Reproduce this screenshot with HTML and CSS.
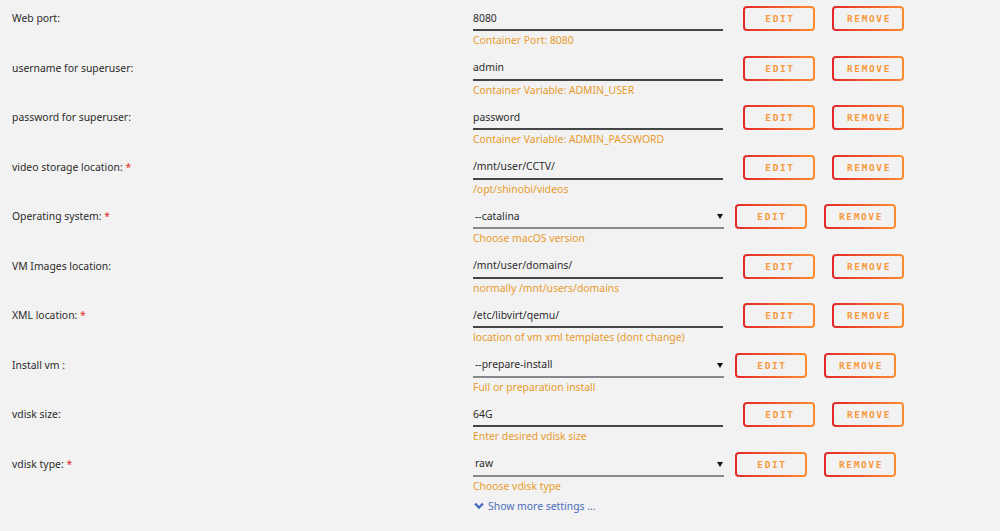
FILE: index.html
```html
<!DOCTYPE html>
<html lang="en">
<head>
    <meta charset="UTF-8">
    <title>Template settings</title>
    <link rel="stylesheet" href="styles.css">
</head>
<body>

    <div class="config-list">
        <div class="config-row">
            <div class="config-label">Web port:</div>
            <div class="config-field">
                <input class="text-input" type="text" value="8080">
                <div class="config-desc">Container Port: 8080</div>
            </div>
            <button class="grad-button edit-button">EDIT</button>
            <button class="grad-button">REMOVE</button>
        </div>

        <div class="config-row">
            <div class="config-label">username for superuser:</div>
            <div class="config-field">
                <input class="text-input" type="text" value="admin">
                <div class="config-desc">Container Variable: ADMIN_USER</div>
            </div>
            <button class="grad-button edit-button">EDIT</button>
            <button class="grad-button">REMOVE</button>
        </div>

        <div class="config-row">
            <div class="config-label">password for superuser:</div>
            <div class="config-field">
                <input class="text-input" type="text" value="password">
                <div class="config-desc">Container Variable: ADMIN_PASSWORD</div>
            </div>
            <button class="grad-button edit-button">EDIT</button>
            <button class="grad-button">REMOVE</button>
        </div>

        <div class="config-row">
            <div class="config-label">video storage location: <span class="required">*</span></div>
            <div class="config-field">
                <input class="text-input" type="text" value="/mnt/user/CCTV/">
                <div class="config-desc">/opt/shinobi/videos</div>
            </div>
            <button class="grad-button edit-button">EDIT</button>
            <button class="grad-button">REMOVE</button>
        </div>

        <div class="config-row select-row">
            <div class="config-label">Operating system: <span class="required">*</span></div>
            <div class="config-field">
                <div class="select-wrap">
                    <select class="select-input">
                        <option>--catalina</option>
                    </select>
                </div>
                <div class="config-desc">Choose macOS version</div>
            </div>
            <button class="grad-button edit-button">EDIT</button>
            <button class="grad-button">REMOVE</button>
        </div>

        <div class="config-row">
            <div class="config-label">VM Images location:</div>
            <div class="config-field">
                <input class="text-input" type="text" value="/mnt/user/domains/">
                <div class="config-desc">normally /mnt/users/domains</div>
            </div>
            <button class="grad-button edit-button">EDIT</button>
            <button class="grad-button">REMOVE</button>
        </div>

        <div class="config-row">
            <div class="config-label">XML location: <span class="required">*</span></div>
            <div class="config-field">
                <input class="text-input" type="text" value="/etc/libvirt/qemu/">
                <div class="config-desc">location of vm xml templates (dont change)</div>
            </div>
            <button class="grad-button edit-button">EDIT</button>
            <button class="grad-button">REMOVE</button>
        </div>

        <div class="config-row select-row">
            <div class="config-label">Install vm :</div>
            <div class="config-field">
                <div class="select-wrap">
                    <select class="select-input">
                        <option>--prepare-install</option>
                    </select>
                </div>
                <div class="config-desc">Full or preparation install</div>
            </div>
            <button class="grad-button edit-button">EDIT</button>
            <button class="grad-button">REMOVE</button>
        </div>

        <div class="config-row">
            <div class="config-label">vdisk size:</div>
            <div class="config-field">
                <input class="text-input" type="text" value="64G">
                <div class="config-desc">Enter desired vdisk size</div>
            </div>
            <button class="grad-button edit-button">EDIT</button>
            <button class="grad-button">REMOVE</button>
        </div>

        <div class="config-row select-row">
            <div class="config-label">vdisk type: <span class="required">*</span></div>
            <div class="config-field">
                <div class="select-wrap">
                    <select class="select-input">
                        <option>raw</option>
                    </select>
                </div>
                <div class="config-desc">Choose vdisk type</div>
            </div>
            <button class="grad-button edit-button">EDIT</button>
            <button class="grad-button">REMOVE</button>
        </div>
    </div>

    <!-- 詳細設定リンク -->
    <div class="more-settings">
        <svg class="chevron" width="10" height="8" viewBox="0 0 10 8">
            <path d="M1 1.5 L5 5.5 L9 1.5" fill="none" stroke="#486dba" stroke-width="2.4"/>
        </svg>
        <span>Show more settings ...</span>
    </div>

</body>
</html>
```

FILE: styles.css
```css
body {
    margin: 0;
    background-color: #f2f2f2;
    font-family: "Noto Sans", "Open Sans", sans-serif;
    font-size: 10.4px;
    color: #2b2b2b;
}
.config-list {
    padding-top: 6px;
}
/* 1行分のレイアウト */
.config-row {
    display: flex;
    align-items: flex-start;
    height: 49.5px;
}
.config-label {
    width: 461px;
    padding-left: 12px;
    line-height: 25px;
}
.required {
    color: #e22828;
}
.config-field {
    width: 250px;
}
.text-input {
    display: block;
    box-sizing: border-box;
    width: 250px;
    height: 25px;
    margin: 0;
    padding: 0;
    border: none;
    border-bottom: 2px solid #444444;
    background: transparent;
    font-family: inherit;
    font-size: 10.4px;
    color: #2b2b2b;
    outline: none;
}
.select-wrap {
    position: relative;
    width: 251px;
}
.select-wrap::after {
    content: "";
    position: absolute;
    right: 1px;
    top: 10px;
    border-left: 3px solid transparent;
    border-right: 3px solid transparent;
    border-top: 5px solid #111111;
}
.select-input {
    display: block;
    box-sizing: border-box;
    width: 251px;
    height: 25px;
    margin: 0;
    padding: 0 0 0 2px;
    border: none;
    border-bottom: 2px solid #888888;
    border-radius: 0;
    background: transparent;
    font-family: inherit;
    font-size: 10.4px;
    color: #2b2b2b;
    appearance: none;
    -webkit-appearance: none;
    outline: none;
}
.config-desc {
    margin-top: 2px;
    line-height: 14px;
    color: #e89a2c;
}
/* グラデーション枠のボタン */
.grad-button {
    box-sizing: border-box;
    width: 72px;
    height: 25px;
    margin: 0 0 0 17px;
    padding: 0 0 0 2px;
    border: 2px solid transparent;
    border-radius: 4px;
    background: linear-gradient(#f2f2f2, #f2f2f2) padding-box,
                linear-gradient(90deg, #e22828, #ff8c2f) border-box;
    font-family: "DejaVu Sans Mono", monospace;
    font-size: 9.5px;
    font-weight: bold;
    letter-spacing: 1.6px;
    color: #f79a3e;
    cursor: pointer;
}
.edit-button {
    margin-left: 20px;
}
.select-row .edit-button {
    margin-left: 12px;
}
/* 詳細設定リンク */
.more-settings {
    display: flex;
    align-items: center;
    gap: 4px;
    margin-left: 474px;
    margin-top: -2px;
    line-height: 14px;
    color: #486dba;
}
```
